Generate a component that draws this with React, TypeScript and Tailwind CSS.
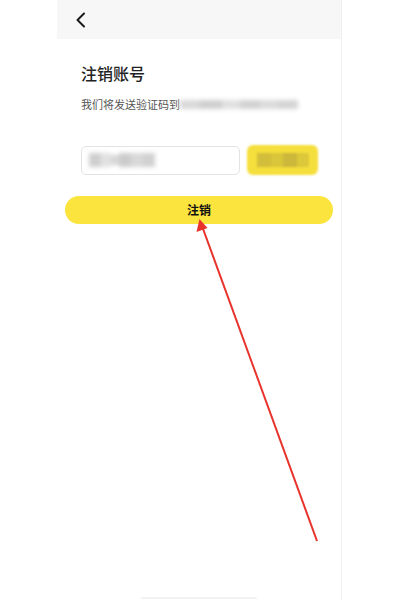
import React from "react";

export default function App() {
  return (
    <div className="relative w-[400px] h-[600px] bg-white overflow-hidden" style={{ fontFamily: '"Noto Sans CJK SC", "Noto Sans", sans-serif' }}>
      <div className="ml-[57px] w-[285px] h-[600px] border-r border-[#f0f0f0] flex flex-col">
        <div className="h-[39px] bg-[#f7f7f7] flex items-center pl-[17px]">
          <svg width="14" height="16" viewBox="0 0 14 16" fill="none">
            <path d="M10 1.5 L3.5 8 L10 14.5" stroke="#1a1a1a" strokeWidth="2" strokeLinecap="round" strokeLinejoin="round" />
          </svg>
        </div>
        <div className="pl-[24px] pr-[8px]">
          <div className="mt-[23px] text-[16px] leading-[22px] font-medium text-[#222]">注销账号</div>
          <div className="mt-[12px] flex items-center h-[16px]">
            <span className="text-[11px] text-[#555]">我们将发送验证码到</span>
            <div className="flex items-center blur-[2px]">
              <div className="w-[20px] h-[9px] bg-[#d9d9d9]" />
              <div className="w-[22px] h-[9px] bg-[#cfcfcf]" />
              <div className="w-[18px] h-[9px] bg-[#e0e0e0]" />
              <div className="w-[20px] h-[9px] bg-[#d2d2d2]" />
              <div className="w-[18px] h-[9px] bg-[#dbdbdb]" />
              <div className="w-[20px] h-[9px] bg-[#d4d4d4]" />
            </div>
          </div>
          <div className="mt-[33px] flex items-center gap-[7px]">
            <div className="w-[159px] h-[29px] border border-[#e3e3e3] rounded-[5px] flex items-center pl-[7px]">
              <div className="flex items-center blur-[2px]">
                <div className="w-[12px] h-[14px] bg-[#cfcfcf]" />
                <div className="w-[10px] h-[14px] bg-[#e2e2e2]" />
                <div className="w-[8px] h-[10px] bg-[#d6d6d6]" />
                <div className="w-[12px] h-[14px] bg-[#cccccc]" />
                <div className="w-[12px] h-[14px] bg-[#d9d9d9]" />
                <div className="w-[12px] h-[14px] bg-[#d1d1d1]" />
              </div>
            </div>
            <div className="w-[71px] h-[30px] rounded-[6px] bg-[#f5df3c] blur-[1px] flex items-center justify-center">
              <div className="w-[14px] h-[14px] bg-[#d2be3a]" />
              <div className="w-[12px] h-[14px] bg-[#dac63a]" />
              <div className="w-[14px] h-[14px] bg-[#ccb83a]" />
              <div className="w-[12px] h-[14px] bg-[#dcc83a]" />
            </div>
          </div>
        </div>
        <div className="mt-[21px] mx-[8px] h-[28px] rounded-full bg-[#fce43e] flex items-center justify-center">
          <span className="text-[12px] font-bold text-[#111]">注销</span>
        </div>
        <div className="mt-auto mb-[1px] mx-auto w-[116px] h-[2px] bg-[#f2f2f2] rounded-full" />
      </div>
      <svg className="absolute inset-0 pointer-events-none" width="400" height="600" viewBox="0 0 400 600">
        <line x1="317" y1="541" x2="202" y2="226" stroke="#e8322c" strokeWidth="2" />
        <polygon points="199.5,219 196.5,232 207.5,228" fill="#e8322c" />
      </svg>
    </div>
  );
}
